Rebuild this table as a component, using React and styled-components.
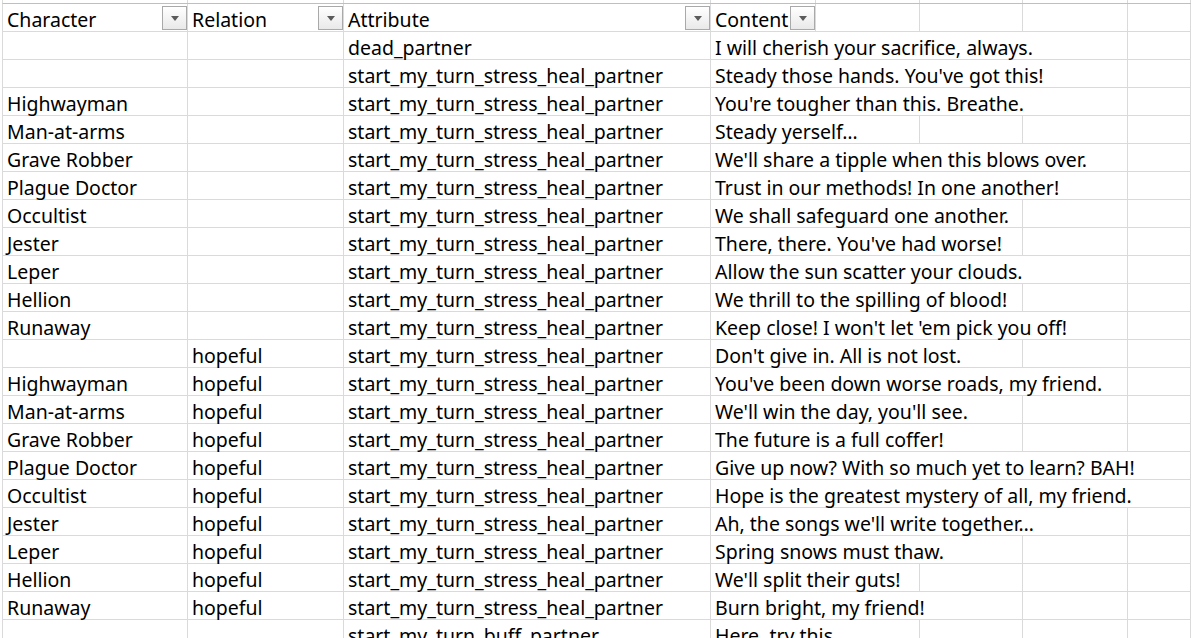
import React from 'react';
import styled, { createGlobalStyle } from 'styled-components';

const GlobalStyle = createGlobalStyle`
  html, body {
    margin: 0;
    padding: 0;
    background: #fff;
    overflow: hidden;
  }
  body {
    font-family: "Noto Sans", "Open Sans", sans-serif;
    color: #000;
  }
`;

// column widths measured off the gridlines
const COLUMNS = '185px 156px 367px 105px 104px 103px 105px 1fr';
const GRID = '#dadada';

const Sheet = styled.div`
  width: 1191px;
  height: 638px;
  overflow: hidden;
  padding-left: 2px;
  box-sizing: border-box;
`;

const Row = styled.div`
  display: grid;
  grid-template-columns: ${COLUMNS};
  border-left: 1px solid ${GRID};
  border-top: ${p => (p.$head ? '1px solid #bfbfbf' : 'none')};
`;

const StubRow = styled(Row)`
  height: 3px;
`;

const Cell = styled.div`
  height: 28px;
  box-sizing: border-box;
  border-right: 1px solid ${GRID};
  border-bottom: 1px solid ${GRID};
  padding: 3px 0 0 4px;
  font-size: 19.5px;
  line-height: 25px;
  white-space: nowrap;
  min-width: 0;
`;

const StubCell = styled.div`
  height: 3px;
  border-right: 1px solid ${GRID};
`;

const HeadCell = styled(Cell)`
  display: flex;
  justify-content: space-between;
  align-items: flex-start;
  padding-top: 0;
`;

const HeadLabel = styled.span`
  padding-top: 3px;
`;

const FilterButton = styled.button`
  width: 25px;
  height: 24px;
  margin-top: 2px;
  padding: 0;
  box-sizing: border-box;
  border: 1px solid #a9a9a9;
  background: linear-gradient(#ffffff, #e9e9e9);
  display: flex;
  align-items: center;
  justify-content: center;
  flex-shrink: 0;
`;

const Caret = styled.span`
  width: 0;
  height: 0;
  border-left: 4.5px solid transparent;
  border-right: 4.5px solid transparent;
  border-top: 5px solid #5b5b5b;
  margin-top: 1px;
`;

const SpillCell = styled(Cell)`
  padding: 0;
  overflow: visible;
`;

// long text runs over the neighbouring empty cells and hides their gridlines
const Spill = styled.span`
  position: relative;
  z-index: 1;
  display: inline-block;
  height: 27px;
  box-sizing: border-box;
  padding: 3px 0 0 4px;
  background: #fff;
`;

const start = 'start_my_turn_stress_heal_partner';
const cast = [
  'Highwayman',
  'Man-at-arms',
  'Grave Robber',
  'Plague Doctor',
  'Occultist',
  'Jester',
  'Leper',
  'Hellion',
  'Runaway',
];

const stressLines = [
  'Steady those hands. You\'ve got this!',
  'You\'re tougher than this. Breathe.',
  'Steady yerself…',
  'We\'ll share a tipple when this blows over.',
  'Trust in our methods! In one another!',
  'We shall safeguard one another.',
  'There, there. You\'ve had worse!',
  'Allow the sun scatter your clouds.',
  'We thrill to the spilling of blood!',
  'Keep close! I won\'t let \'em pick you off!',
];

const hopefulLines = [
  'Don\'t give in. All is not lost.',
  'You\'ve been down worse roads, my friend.',
  'We\'ll win the day, you\'ll see.',
  'The future is a full coffer!',
  'Give up now? With so much yet to learn? BAH!',
  'Hope is the greatest mystery of all, my friend.',
  'Ah, the songs we\'ll write together…',
  'Spring snows must thaw.',
  'We\'ll split their guts!',
  'Burn bright, my friend!',
];

const rows = [
  ['', '', 'dead_partner', 'I will cherish your sacrifice, always.'],
  ...stressLines.map((text, i) => [i ? cast[i - 1] : '', '', start, text]),
  ...hopefulLines.map((text, i) => [i ? cast[i - 1] : '', 'hopeful', start, text]),
  ['', '', 'start_my_turn_buff_partner', 'Here, try this.'],
];

const headers = ['Character', 'Relation', 'Attribute', 'Content'];
const EMPTY = 4;

const App = () => (
  <>
    <GlobalStyle />
    <Sheet>
      <StubRow>
        {Array.from({ length: 8 }).map((_, i) => (
          <StubCell key={i} />
        ))}
      </StubRow>
      <Row $head>
        {headers.map(h => (
          <HeadCell key={h}>
            <HeadLabel>{h}</HeadLabel>
            <FilterButton>
              <Caret />
            </FilterButton>
          </HeadCell>
        ))}
        {Array.from({ length: EMPTY }).map((_, i) => (
          <HeadCell key={i} />
        ))}
      </Row>
      {rows.map(([who, rel, attr, text], r) => (
        <Row key={r}>
          <Cell>{who}</Cell>
          <Cell>{rel}</Cell>
          <Cell>{attr}</Cell>
          <SpillCell>
            <Spill>{text}</Spill>
          </SpillCell>
          {Array.from({ length: EMPTY }).map((_, i) => (
            <Cell key={i} />
          ))}
        </Row>
      ))}
    </Sheet>
  </>
);

export default App;
